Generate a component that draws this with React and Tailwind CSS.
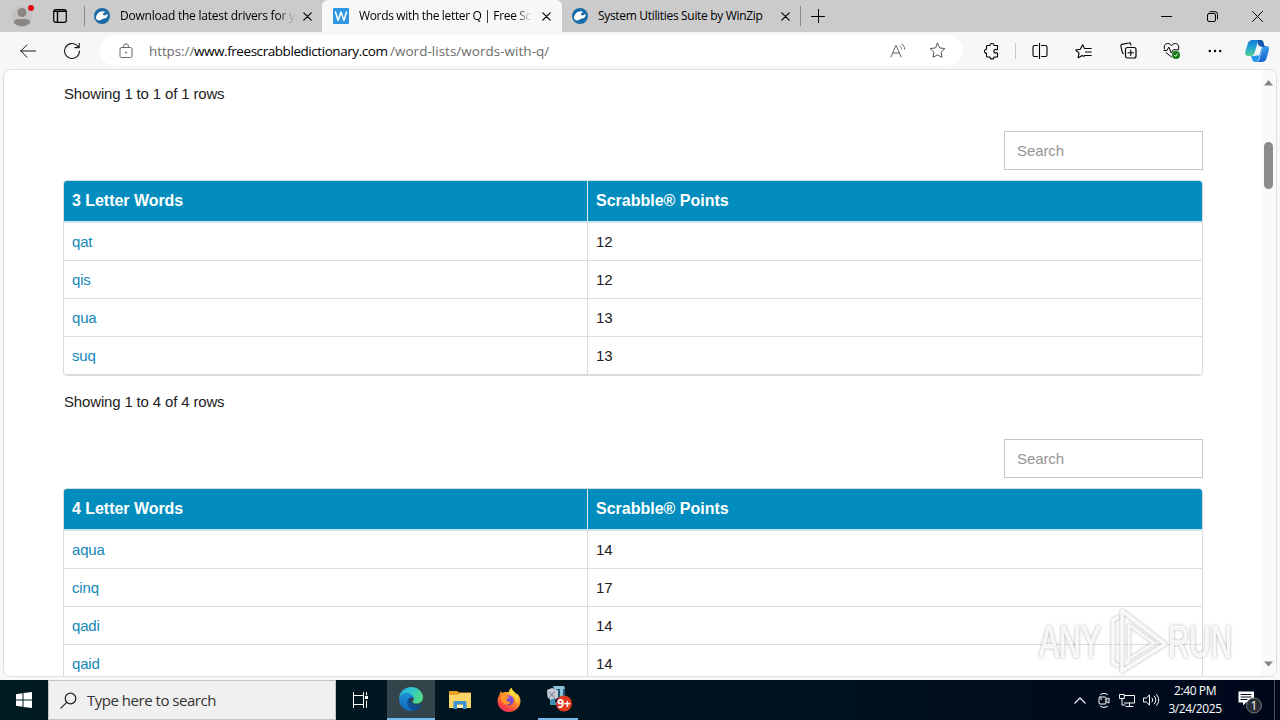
import React from "react";

const ui = "font-['Open_Sans','Noto_Sans',sans-serif]";

function Svg({ w, h, box, className = "", children }) {
  return (
    <svg width={w} height={h} viewBox={box || `0 0 ${w} ${h}`} fill="none" stroke="currentColor" strokeWidth="1" strokeLinecap="round" strokeLinejoin="round" className={`shrink-0 ${className}`}>
      {children}
    </svg>
  );
}

const Close = () => (
  <Svg w={9} h={9} className="text-black"><path d="M.8.8l7.4 7.4M8.2.8L.8 8.2" strokeWidth="1.2" /></Svg>
);

const WrenchLogo = () => (
  <Svg w={16} h={16}>
    <circle cx="8" cy="8" r="8" fill="#1a6ba6" stroke="none" />
    <path d="M2 9.500C2.500 6 5.200 3.200 8.800 3.200c1 0 1.800.3 2.400.7L8.900 5.600l.4 1.500 1.600.4 2.700-1.700c.4 3-1.300 4.700-3.700 4.700-1.100 0-1.800.9-3 1.500-2.500 1.200-5-.3-4.900-2.500z" fill="#fff" stroke="none" />
  </Svg>
);

function TitleBar() {
  return (
    <div className="flex h-8 items-center bg-[#cbcbcb]">
      <div className="flex h-8 w-[84px] items-center pl-3">
        <Svg w={22} h={26}>
          <circle cx="10" cy="14" r="10.500" fill="#c3c3c3" stroke="none" />
          <circle cx="10" cy="9.500" r="4.500" fill="#898583" stroke="none" />
          <path d="M2 20c0-3 1.500-4 4-4h8c2.500 0 4 1 4 4-2 2-5 3.200-8 3.200S4 22 2 20z" fill="#898583" stroke="none" />
          <circle cx="19" cy="5" r="3" fill="#e00b1c" stroke="none" />
        </Svg>
        <Svg w={14} h={14} className="ml-[19px] text-black">
          <rect x=".7" y=".7" width="12.600" height="12.600" rx="2" strokeWidth="1.200" />
          <path d="M1 2.300h12M4.500 3v10" strokeWidth="1.400" />
        </Svg>
      </div>
      <div className="h-5 w-px bg-[#8a8a8a]" />
      <div className="flex h-8 w-[237px] items-center pl-[9px]">
        <WrenchLogo />
        <div className="ml-[10px] w-[175px] overflow-hidden whitespace-nowrap bg-gradient-to-r from-black from-90% to-transparent bg-clip-text text-[12px] leading-4 tracking-[-0.23px] text-transparent">Download the latest drivers for y</div>
        <div className="ml-[8px]"><Close /></div>
      </div>
      <div className="flex h-8 w-[240px] items-center rounded-t-md bg-[#f7f7f7] pl-[11px]">
        <Svg w={16} h={16}>
          <rect width="16" height="16" rx="1" fill="#2f96e4" stroke="none" />
          <path d="M2.500 4l2.600 8.500L8 4l2.900 8.500L13.500 4" stroke="#fff" strokeWidth="1.500" />
        </Svg>
        <div className="ml-[10px] w-[173px] overflow-hidden whitespace-nowrap bg-gradient-to-r from-black from-90% to-transparent bg-clip-text text-[12px] leading-4 tracking-[-0.34px] text-transparent">Words with the letter Q | Free Scr</div>
        <div className="ml-[10px]"><Close /></div>
      </div>
      <div className="flex h-8 w-[238px] items-center pl-[10px]">
        <WrenchLogo />
        <div className="ml-[10px] w-[173px] whitespace-nowrap text-[12px] leading-4 tracking-[-0.32px] text-black">System Utilities Suite by WinZip</div>
        <div className="ml-[10px]"><Close /></div>
      </div>
      <div className="h-5 w-px bg-[#8a8a8a]" />
      <Svg w={14} h={14} className="ml-[10px] text-black"><path d="M7.500 .5v13M.5 7.500h13" /></Svg>
      <div className="ml-auto flex items-center gap-[35px] pr-[17px] text-black">
        <Svg w={11} h={11}><path d="M.5 5.500h10" /></Svg>
        <Svg w={11} h={11} className="-mr-px">
          <rect x=".5" y="2.500" width="8" height="8" rx="1.500" />
          <path d="M3 .7h5a2.500 2.500 0 0 1 2.500 2.500V8" />
        </Svg>
        <Svg w={11} h={11}><path d="M.5.5l10 10M10.500.5l-10 10" /></Svg>
      </div>
    </div>
  );
}

function Toolbar() {
  return (
    <div className="flex h-[37px] items-center bg-[#f7f7f7] text-[#1b1b1b]">
      <Svg w={16} h={14} className="ml-5"><path d="M.8 7h15M7 .8L.8 7 7 13.200" /></Svg>
      <Svg w={18} h={18} className="ml-[27px]"><path d="M16.500 9A7.500 7.500 0 1 1 14 3.400L16 5.500M16.200 1.200v4.400h-4.400" strokeWidth="1.100" /></Svg>
      <div className="ml-[19px] flex h-[31px] w-[863px] items-center rounded-full bg-white pl-[19px]">
        <Svg w={14} h={16} className="text-[#666]">
          <rect x="1" y="4.500" width="12" height="10" rx="1.500" />
          <path d="M4.500 4.500V3.300a2.500 2.500 0 0 1 5 0v1.200" />
          <circle cx="7" cy="9.500" r=".6" fill="currentColor" />
        </Svg>
        <div className="ml-[16px] flex w-[730px] whitespace-nowrap text-[13.5px] leading-5 text-[#6c6c6c]">
          <span className="w-[45px] tracking-[-0.1px]">https://</span>
          <span className="w-[196px] tracking-[-0.44px] text-black">www.freescrabbledictionary.com</span>
          <span className="tracking-[0.02px]">/word-lists/words-with-q/</span>
        </div>
        <Svg w={17} h={16} className="ml-[11px] text-[#666]">
          <path d="M1 14L5.800 2.500h.4L11 14M2.700 10h6.600M10 3c1 .6 1.600 1.600 1.600 3M12 1.200c1.600 1 2.600 2.600 2.600 4.800" />
        </Svg>
        <Svg w={17} h={17} className="ml-[22px] text-[#555]">
          <path d="M8.500 1.200l2.200 4.700 5.100.7-3.700 3.600.9 5.200-4.500-2.500L4 15.400l.9-5.200-3.700-3.600 5.100-.7z" />
        </Svg>
      </div>
      <Svg w={18} h={18} className="ml-[20px] text-black">
        <path d="M4 3.500h3a2 2 0 0 1 4 0h3.500v3.700a.8.8 0 0 1-1 .5 1.800 1.800 0 1 0 0 3.100.8.800 0 0 1 1 .5v3.700H11a2 2 0 0 1-4 0H4.500a1 1 0 0 1-1-1v-2.800a2 2 0 0 1 0-4V4.500z" strokeWidth="1.100" />
      </Svg>
      <div className="ml-[14px] h-4 w-px bg-[#c8c8c8]" />
      <Svg w={16} h={16} className="ml-[16px] text-black">
        <path d="M5.500 2.500H2.500A1.500 1.500 0 0 0 1 4v8a1.500 1.500 0 0 0 1.500 1.500h3M9.500 2.500h4A1.500 1.500 0 0 1 15 4v8a1.500 1.500 0 0 1-1.500 1.500h-4M7.500 .5v15" strokeWidth="1.100" />
      </Svg>
      <Svg w={17} h={16} className="ml-[27px] text-black">
        <path d="M9 13.500l-1.800-.9-4 2.100.8-4.500L.8 7l4.500-.7L7.700 1.800l1.800 3.700M9.500 5.500h6.700M10.500 9h5.700M9.500 12.500h6.700" strokeWidth="1.100" />
      </Svg>
      <Svg w={17} h={17} className="ml-[28px] text-black">
        <rect x="5.500" y="5.500" width="10.500" height="10.500" rx="2" strokeWidth="1.200" />
        <path d="M10.750 8v5.500M8 10.750h5.500M11 3L10.600 2A1.500 1.500 0 0 0 8.800 1L2 2.400A1.500 1.500 0 0 0 .9 4.200l1.400 6.400a1.500 1.500 0 0 0 1 1" strokeWidth="1.100" />
      </Svg>
      <Svg w={18} h={17} className="ml-[26px] text-black">
        <path d="M1.500 7C.5 4 2 1.500 4.800 1.500c1.800 0 2.700 1 3.700 2.300 1-1.300 2-2.300 3.700-2.300 2.800 0 4.300 2.500 3.300 5.500M.8 8.500H4L5.800 5l2.500 6 2-3.200h5.500M3 10.500L8.500 15" />
        <circle cx="13" cy="13" r="4" fill="#107c10" stroke="none" />
        <path d="M11.300 13.200l1.200 1.100 2.200-2.400" stroke="#fff" />
      </Svg>
      <Svg w={14} h={4} className="ml-[27px] text-black">
        <g fill="currentColor" stroke="none"><circle cx="1.800" cy="2" r="1.200" /><circle cx="7" cy="2" r="1.200" /><circle cx="12.200" cy="2" r="1.200" /></g>
      </Svg>
      <Svg w={24} h={24} className="ml-[23px]">
        <defs>
          <linearGradient id="cpA" x1="0" y1="0" x2="0" y2="1"><stop stopColor="#1678d4" /><stop offset=".45" stopColor="#22a5d8" /><stop offset="1" stopColor="#55d18b" /></linearGradient>
          <linearGradient id="cpB" x1="0" y1="0" x2="0" y2="1"><stop stopColor="#49b4ee" /><stop offset="1" stopColor="#145fd0" /></linearGradient>
        </defs>
        <g stroke="none">
          <path d="M16 1h-3l4 6h4.500c2.500 0 3 2 2.300 4.500l-2.200 7.500C20.800 22 19 23 16.500 23H11c2 0 3-1.500 3.600-3.500L18 8c-.8-2.500-.7-7-2-7z" fill="url(#cpB)" />
          <path d="M7.500 1H16c-2 0-3 1.500-3.600 3.500L10 12.500C9.300 15 8.500 17 6 17H3C.5 17-.4 14.700.4 12.200l2.300-7.500C3.600 2.200 5 1 7.500 1z" fill="url(#cpA)" />
          <path d="M13 1h3c1.500 0 2.200 1 2.700 3l1.100 4H17c-2.500 0-3.500-1.500-4-3z" fill="#1556a8" />
          <path d="M6 17h3c1.500 0 2.500-1 3-2.600L14 8h4l-3.500 10C13.500 21 12.500 23 10.500 23 8 23 7.500 21.500 7 20z" fill="#2596ea" />
          <path d="M13.800 7.500H17L14.200 16.500H11z" fill="#f2f8fc" />
        </g>
      </Svg>
    </div>
  );
}

function WordTable({ title, rows }) {
  return (
    <div className="w-[1140px] overflow-hidden rounded border border-[#d9dcdd]">
      <div className="grid h-[42px] grid-cols-[524px_1fr] border-b-2 border-[#cfe6ef] bg-[#028dbe] text-[16px] font-bold text-white">
        <div className="flex items-center border-r border-[#dff1f7] pl-2 pb-px tracking-[-0.04px]">{title}</div>
        <div className="flex items-center pl-2 pb-px">Scrabble® Points</div>
      </div>
      {rows.map(([word, points]) => (
        <div key={word} className="grid h-[38px] grid-cols-[524px_1fr] border-b border-[#dcdcdc] text-[15px] tracking-[-0.16px]">
          <div className="flex items-center border-r border-[#dcdcdc] pl-2 pt-0.5 text-[#1488b6]">{word}</div>
          <div className="flex items-center pl-2 pt-0.5 text-[#222]">{points}</div>
        </div>
      ))}
    </div>
  );
}

const SearchBox = () => (
  <div className="mt-[27px] mb-[10px] ml-[941px] flex h-[39px] w-[199px] items-center border border-[#c6c6c6] pt-0.5 pl-3 text-[15px] tracking-[-0.1px] text-[#959595]">Search</div>
);

const Showing = ({ n }) => (
  <div className="h-5 pl-px text-[15px] leading-5 tracking-[-0.16px] text-[#222]">Showing 1 to {n} of {n} rows</div>
);

function Watermark() {
  return (
    <svg className="absolute top-[536px] left-[1031px]" width="224" height="72" viewBox="0 0 224 72" fill="none">
      <g style={{ filter: "drop-shadow(0 0 1.5px rgba(0,0,0,.35))" }}>
        <g fill="#fff" fillOpacity=".85" fontFamily="'Liberation Sans Narrow','Liberation Sans',sans-serif" fontSize="45" stroke="#fff" strokeWidth=".8">
          <text x="4" y="51" textLength="62" lengthAdjust="spacingAndGlyphs">ANY</text>
          <text x="133" y="51" textLength="64" lengthAdjust="spacingAndGlyphs">RUN</text>
        </g>
        <g stroke="#fff" strokeOpacity=".9" strokeWidth="3.500" strokeLinejoin="round">
          <path d="M84 60l-6-3V14l6-3M87 5v60l43-27L87 5z" />
          <path d="M94 19v34l25-16z" strokeWidth="2.500" />
        </g>
      </g>
    </svg>
  );
}

function Page() {
  return (
    <div className="relative mx-[3px] h-[608px] overflow-hidden rounded-lg border border-[#dfdfdf] bg-white font-['Liberation_Sans',Arial,sans-serif]">
      <div className="flex h-full">
        <div className="w-[1257px] pl-[59px] pt-[14px]">
          <Showing n={1} />
          <SearchBox />
          <WordTable title="3 Letter Words" rows={[["qat", 12], ["qis", 12], ["qua", 13], ["suq", 13]]} />
          <div className="h-4" />
          <Showing n={4} />
          <SearchBox />
          <WordTable title="4 Letter Words" rows={[["aqua", 14], ["cinq", 17], ["qadi", 14], ["qaid", 14]]} />
        </div>
        <div className="flex h-full w-[15px] flex-col items-center bg-[#fafafa] pt-[10px] pb-[9px]">
          <Svg w={9} h={6}><path d="M4.500 0L9 5.500H0z" fill="#858585" stroke="none" /></Svg>
          <div className="mt-[56px] h-[47px] w-[9px] rounded-full bg-[#8b8b8b]" />
          <Svg w={9} h={6} className="mt-auto"><path d="M4.500 5.500L9 .5H0z" fill="#858585" stroke="none" /></Svg>
        </div>
      </div>
      <Watermark />
    </div>
  );
}

const EdgeIcon = () => (
  <Svg w={24} h={24}>
    <defs>
      <linearGradient id="eA" x1="0" y1="0" x2="1" y2=".4"><stop stopColor="#2aa4e0" /><stop offset=".5" stopColor="#2fc6cf" /><stop offset="1" stopColor="#4fd98a" /></linearGradient>
      <linearGradient id="eB" x1="0" y1="0" x2="0" y2="1"><stop stopColor="#1b8fdc" /><stop offset="1" stopColor="#1266b8" /></linearGradient>
    </defs>
    <g stroke="none">
      <path d="M0 11.500C.3 5 5.500 0 12 0c7 0 12 5 12 10.300 0 4-3 6.300-6.300 6.300-2.500 0-4.200-.9-4.200-1.700s1.200-1 1.200-3.200C14.700 8.500 11 6.500 7.500 6.500 3.500 6.500 1 9 0 11.500z" fill="url(#eA)" />
      <path d="M0 11.500C1 8.500 4 6.500 7.500 6.500c3.800 0 7.200 2 7.200 5.200-.8-1-1.800-1.400-3-1.200-1.800.4-3.200 2.300-3.200 4.700 0 4 3.500 7.800 8 8-1.500.6-3 .8-4.500.8-7 0-12-5.500-12-12.500z" fill="url(#eB)" />
      <path d="M8.500 15.200c0-2 .9-3.600 2.200-4.400-.5 4 2.800 7.400 7.300 7.400 1.700 0 3-.5 3.900-1 .4-.2.700.2.500.500C21 20.500 19 22.500 16.500 23.200c-4.500-.2-8-4-8-8z" fill="#0c4f94" />
    </g>
  </Svg>
);

const FolderIcon = () => (
  <Svg w={22} h={20}>
    <g stroke="none">
      <path d="M0 2C0 1.300.5 1 1.200 1h7l2 1.500H21c.6 0 1 .4 1 1v2H0z" fill="#e5a021" />
      <path d="M0 5l10-.3 1.500-1.700H22v15H0z" fill="#fbd568" />
      <path d="M4.500 19v-6.500c0-1 .6-1.500 1.500-1.500h10c.9 0 1.500.5 1.500 1.500V19H14v-4.500H8V19z" fill="#3b93cd" />
      <path d="M8 15h6v3H8z" fill="#fff0b5" />
    </g>
  </Svg>
);

const FirefoxIcon = () => (
  <Svg w={24} h={24}>
    <defs>
      <linearGradient id="fA" x1=".8" y1="0" x2=".2" y2="1"><stop stopColor="#ffe44a" /><stop offset=".4" stopColor="#ff9a26" /><stop offset=".75" stopColor="#fb4a3d" /><stop offset="1" stopColor="#ee2a73" /></linearGradient>
      <linearGradient id="fB" x1="0" y1="0" x2="0" y2="1"><stop stopColor="#a45ae8" /><stop offset="1" stopColor="#5a3bbd" /></linearGradient>
    </defs>
    <g stroke="none">
      <path d="M2.500 7C2.700 5 3.500 3.500 4 3c.2 1 .6 1.700 1 2.100C6 4.300 7 4 8 4c1.500 0 3 .2 4 0 .2-2 1.500-3.500 2.700-4 .2 3 3.800 4 5.300 7-.1-1 .1-1.500.1-1.500C22 7.500 23.500 10 23.500 13c0 6-5 11-11.500 11S.5 19 .5 13c0-2.500.8-4.500 2-6z" fill="url(#fA)" />
      <circle cx="11.800" cy="12.200" r="5" fill="url(#fB)" />
      <path d="M4.500 7.500c2-1 4-.5 5 .8 1 0 2.500.3 2.500 1-.3 1-2 1.200-2.500 2.200.2 2 2.500 3 4.500 2-1 3.500-5.500 4.500-8 1.500C4 13 3.500 9.500 4.500 7.500z" fill="#ff952b" />
      <path d="M14.700 0c.2 3 3.800 4 5.300 7 1.500 3.500.8 6.500-.5 8.500 0-4-2-7-5-8-1.700-1.200-2.500-2.200-2.500-3.500.2-2 1.500-3.500 2.700-4z" fill="#ffd83c" />
    </g>
  </Svg>
);

const AppIcon = () => (
  <Svg w={30} h={28}>
    <g stroke="none">
      <path d="M9 2h10v11H9z" fill="#1f5a78" />
      <path d="M7 1h11l1 3H8zM14 4h3v9h-3z" fill="#8fc3dc" />
      <path d="M1 5l5-2 6 2.200v7L6.500 17 1.500 12z" fill="#c9cdd6" />
      <path d="M4 15l5-2v4l3 1v2H4z" fill="#3f8fb4" />
      <path d="M3.500 7.500l5 5M8.500 7l-5 5" stroke="#8b93a5" strokeWidth="1.200" />
    </g>
    <circle cx="18" cy="18.500" r="8" fill="#dd3a20" stroke="none" />
    <text x="18" y="23" textAnchor="middle" fontSize="12" fontWeight="700" fontFamily="'Open Sans',sans-serif" fill="#fff" stroke="none">9+</text>
  </Svg>
);

function Taskbar() {
  return (
    <div className="flex h-10 items-center bg-gradient-to-r from-[#001a22] via-[#00141f] to-[#00081c] text-white">
      <div className="flex w-12 justify-center">
        <Svg w={16} h={16}>
          <path d="M0 2.200L6.500 1.300v6.200H0zM7.500 1.100L16 0v7.500H7.500zM0 8.500h6.500v6.200L0 13.800zM7.500 8.500H16V16l-8.500-1.100z" fill="#fff" stroke="none" />
        </Svg>
      </div>
      <div className="flex h-10 w-[288px] items-center border border-[#c3c3c3] bg-[#f0f0f0] pl-[11px] text-[#222]">
        <Svg w={17} h={17}><circle cx="10.500" cy="6.500" r="5.300" strokeWidth="1.200" /><path d="M6.700 10.300L.8 16.200" strokeWidth="1.200" /></Svg>
        <span className="ml-[10px] whitespace-nowrap text-[15px] tracking-[-0.48px] text-[#333]">Type here to search</span>
      </div>
      <div className="flex w-[51px] justify-center pr-[2px]">
        <Svg w={17} h={16}>
          <path d="M1.500 .5v3h10v-3M1.500 15.500v-3h10v3M1.500 5.500v5M11.500 5.500v5M1.500 3.500v9M11.500 3.500v9M14.500.5v2.500M14.500 9v6.500" />
          <rect x="13" y="4" width="3" height="3" fill="#fff" stroke="none" />
        </Svg>
      </div>
      <div className="flex h-10 w-12 items-center justify-center border-b-2 border-[#76b9ed] bg-[#33444b]"><EdgeIcon /></div>
      <div className="flex w-[49px] justify-center"><FolderIcon /></div>
      <div className="flex w-[49px] justify-center"><FirefoxIcon /></div>
      <div className="ml-[5px] flex h-10 w-10 items-center border-b-2 border-[#76b9ed] pl-[8px]"><AppIcon /></div>
      <div className="ml-auto flex h-10 items-center">
        <Svg w={12} h={7}><path d="M.8 6.200L6 1l5.200 5.200" strokeWidth="1.200" /></Svg>
        <Svg w={12} h={16} className="ml-[12px]">
          <rect x="1" y="5" width="7" height="7" rx="1" /><path d="M8 7.500l3-1.500v5L8 9.500M2.500 2.500c2-1.500 5-1.500 7 0M2.500 14.300c2 1.500 5 1.500 7 0" /><circle cx="3" cy="7" r=".3" />
        </Svg>
        <Svg w={17} h={15} className="ml-[9px]">
          <path d="M5.500 2.500h10v7.500h-10M10.500 10v3.500M7 13.500h7M.8 1.500h4.500v4H.8zM3 5.500V12h3" />
        </Svg>
        <Svg w={17} h={14} className="ml-[7px]">
          <path d="M.8 5h2.500L6.500 2v10L3.300 9H.8zM9 5c1 1.300 1 2.700 0 4M11.300 3.200c2 2.500 2 5.100 0 7.600M13.500 1.500c3 3.500 3 7.500 0 11" />
        </Svg>
        <div className="ml-[8px] w-[54px] whitespace-nowrap text-center text-[12px] leading-[18px] tracking-[-0.4px]">
          <div className="h-[18px]">2:40 PM</div>
          <div className="h-[18px]">3/24/2025</div>
        </div>
        <Svg w={27} h={27} className="ml-[16px]">
          <path d="M.5 4.500h15.500v11H8l-3 3v-3H.5z" fill="#fff" stroke="none" />
          <path d="M3 7.500h10M3 10h10M3 12.500h6" stroke="#00081c" />
          <circle cx="16" cy="18.500" r="7.500" fill="#2a2d35" stroke="#777" />
          <text x="16" y="23" textAnchor="middle" fontSize="12" fontFamily="'Open Sans',sans-serif" fill="#fff" stroke="none">1</text>
        </Svg>
        <div className="ml-[9px] h-10 w-px bg-[#4a5160]" />
        <div className="w-[5px]" />
      </div>
    </div>
  );
}

export default function App() {
  return (
    <div className={`h-[720px] w-[1280px] overflow-hidden bg-[#f7f7f7] ${ui}`}>
      <TitleBar />
      <Toolbar />
      <Page />
      <div className="h-[3px]" />
      <Taskbar />
    </div>
  );
}
